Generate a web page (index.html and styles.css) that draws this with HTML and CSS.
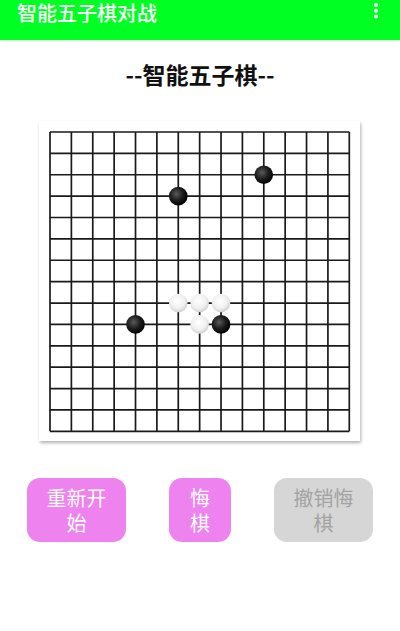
FILE: index.html
```html
<!DOCTYPE html>
<html lang="zh-CN">
<head>
    <meta charset="UTF-8">
    <meta name="viewport" content="width=device-width, initial-scale=1.0">
    <title>智能五子棋对战</title>
    <link rel="stylesheet" href="styles.css">
</head>
<body>
    <header class="appbar">
        <span class="appbar-title">智能五子棋对战</span>
        <svg class="menu-icon" width="8" height="20" viewBox="0 0 8 20">
            <circle cx="4" cy="3" r="2"/>
            <circle cx="4" cy="8.8" r="2"/>
            <circle cx="4" cy="14.6" r="2"/>
        </svg>
    </header>

    <h1 class="heading">--智能五子棋--</h1>

    <section class="board">
        <svg id="grid" class="grid" width="302" height="302" viewBox="-1 -1 302 302"></svg>
    </section>

    <div class="actions">
        <button class="btn btn-wide">重新开始</button>
        <button class="btn btn-narrow">悔棋</button>
        <button class="btn btn-wide btn-disabled" disabled>撤销悔棋</button>
    </div>

    <script>
        const SIZE = 15;
        const CELL = 299.3 / 14;
        const svg = document.getElementById('grid');

        // stones: [col, row, colour]
        const stones = [
            [10, 2, 'b'], [6, 3, 'b'],
            [6, 8, 'w'], [7, 8, 'w'], [8, 8, 'w'],
            [4, 9, 'b'], [7, 9, 'w'], [8, 9, 'b']
        ];

        let html = `
            <defs>
                <radialGradient id="blackStone" cx="40%" cy="38%" r="65%">
                    <stop offset="0%" stop-color="#5a5a5a"/>
                    <stop offset="55%" stop-color="#1c1c1c"/>
                    <stop offset="100%" stop-color="#000"/>
                </radialGradient>
                <radialGradient id="whiteStone" cx="45%" cy="40%" r="65%">
                    <stop offset="0%" stop-color="#ffffff"/>
                    <stop offset="60%" stop-color="#f0f0f0"/>
                    <stop offset="100%" stop-color="#c8c8c8"/>
                </radialGradient>
            </defs>`;

        for (let i = 0; i < SIZE; i++) {
            const p = (i * CELL).toFixed(2);
            html += `<line x1="${p}" y1="0" x2="${p}" y2="299.3"/>`;
            html += `<line x1="0" y1="${p}" x2="299.3" y2="${p}"/>`;
        }

        stones.forEach(([c, r, colour]) => {
            const fill = colour === 'b' ? 'url(#blackStone)' : 'url(#whiteStone)';
            html += `<circle class="stone" cx="${(c * CELL).toFixed(2)}" cy="${(r * CELL).toFixed(2)}" r="9.3" fill="${fill}"/>`;
        });

        svg.innerHTML = html;
    </script>
</body>
</html>
```

FILE: styles.css
```css
body {
    margin: 0;
    padding: 0;
    background: #ffffff;
    font-family: 'Noto Sans CJK SC', 'Noto Sans', sans-serif;
    width: 400px;
    height: 631px;
    overflow: hidden;
}
.appbar {
    height: 40px;
    box-sizing: border-box;
    background: #00ff22;
    display: flex;
    justify-content: space-between;
    align-items: flex-start;
    padding: 2px 20px 0 17px;
    box-shadow: 0 1px 2px rgba(0, 0, 0, 0.15);
}
.appbar-title {
    color: #ffffff;
    font-size: 20px;
    line-height: 21px;
    font-weight: 500;
}
.menu-icon {
    fill: #ffffff;
}
.heading {
    margin: 19px 0 0;
    text-align: center;
    font-size: 23px;
    line-height: 30px;
    font-weight: 700;
    color: #111111;
}
.board {
    width: 321px;
    height: 320px;
    margin: 32px 0 0 39px;
    background: #ffffff;
    box-shadow: 1px 2px 3px rgba(0, 0, 0, 0.3);
    box-sizing: border-box;
    padding: 10px 0 0 10px;
}
.grid {
    display: block;
    overflow: visible;
}
.grid line {
    stroke: #1a1a1a;
    stroke-width: 1.7;
}
.actions {
    display: flex;
    justify-content: center;
    gap: 43px;
    margin-top: 37px;
}
.btn {
    height: 64px;
    border: none;
    border-radius: 13px;
    background: #ee82ee;
    color: #ffffff;
    font-family: 'Noto Sans CJK SC', 'Noto Sans', sans-serif;
    font-size: 20px;
    line-height: 25px;
    padding: 0 16px;
    text-align: center;
    cursor: pointer;
}
.btn-wide {
    width: 99px;
}
.btn-narrow {
    width: 62px;
}
.btn-disabled {
    background: #d6d6d6;
    color: #a3a3a3;
    cursor: default;
}
```
